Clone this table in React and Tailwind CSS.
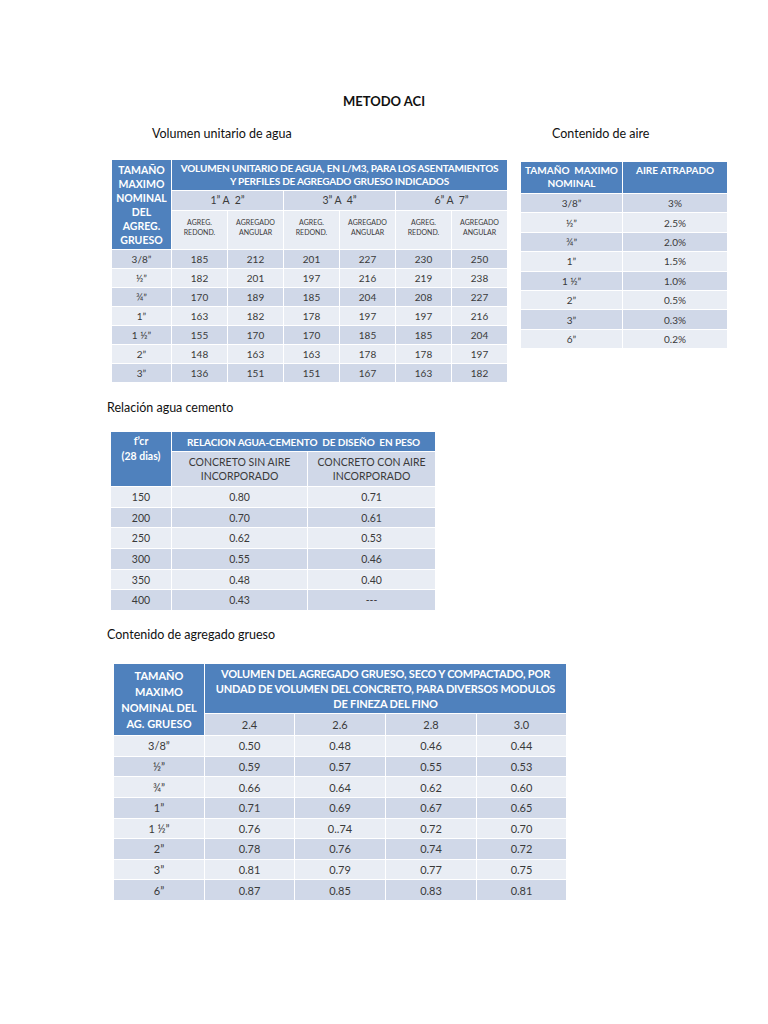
const BLUE = "bg-[#4f81bd]";
const DARK = "bg-[#d0d8e8]";
const LIGHT = "bg-[#e9edf4]";
const cell = "border border-white p-0 text-center align-middle";

const aguaRows = [
  ["3/8”", 185, 212, 201, 227, 230, 250],
  ["½”", 182, 201, 197, 216, 219, 238],
  ["¾”", 170, 189, 185, 204, 208, 227],
  ["1”", 163, 182, 178, 197, 197, 216],
  ["1 ½”", 155, 170, 170, 185, 185, 204],
  ["2”", 148, 163, 163, 178, 178, 197],
  ["3”", 136, 151, 151, 167, 163, 182],
];

const aireRows = [
  ["3/8”", "3%"],
  ["½”", "2.5%"],
  ["¾”", "2.0%"],
  ["1”", "1.5%"],
  ["1 ½”", "1.0%"],
  ["2”", "0.5%"],
  ["3”", "0.3%"],
  ["6”", "0.2%"],
];

const cementoRows = [
  ["150", "0.80", "0.71"],
  ["200", "0.70", "0.61"],
  ["250", "0.62", "0.53"],
  ["300", "0.55", "0.46"],
  ["350", "0.48", "0.40"],
  ["400", "0.43", "---"],
];

const gruesoRows = [
  ["3/8”", "0.50", "0.48", "0.46", "0.44"],
  ["½”", "0.59", "0.57", "0.55", "0.53"],
  ["¾”", "0.66", "0.64", "0.62", "0.60"],
  ["1”", "0.71", "0.69", "0.67", "0.65"],
  ["1 ½”", "0.76", "0..74", "0.72", "0.70"],
  ["2”", "0.78", "0.76", "0.74", "0.72"],
  ["3”", "0.81", "0.79", "0.77", "0.75"],
  ["6”", "0.87", "0.85", "0.83", "0.81"],
];

function TablaAgua() {
  return (
    <table className="border-collapse table-fixed w-[396px] text-[#3a3a3a]">
      <colgroup>
        <col className="w-[60px]" />
        {[0, 1, 2, 3, 4, 5].map((i) => (
          <col key={i} className="w-[56px]" />
        ))}
      </colgroup>
      <tbody>
        <tr className="h-[31px]">
          <td rowSpan={3} className={`${cell} ${BLUE} text-white font-bold text-[10.5px] leading-[14px] align-top pt-[3px]`}>
            TAMAÑO
            <br />
            MAXIMO
            <br />
            NOMINAL
            <br />
            DEL
            <br />
            AGREG.
            <br />
            GRUESO
          </td>
          <td colSpan={6} className={`${cell} ${BLUE} text-white font-bold text-[10px] leading-[13px] tracking-[-0.2px]`}>
            VOLUMEN UNITARIO DE AGUA, EN L/M3, PARA LOS ASENTAMIENTOS
            <br />Y PERFILES DE AGREGADO GRUESO INDICADOS
          </td>
        </tr>
        <tr className="h-[20px]">
          {["1” A  2”", "3” A  4”", "6” A  7”"].map((t) => (
            <td key={t} colSpan={2} className={`${cell} ${DARK} text-[10.5px] whitespace-pre`}>
              {t}
            </td>
          ))}
        </tr>
        <tr className="h-[39px]">
          {[0, 1, 2].flatMap((i) => [
            <td key={`r${i}`} className={`${cell} ${LIGHT} text-[7px] leading-[10px] pb-[6px]`}>
              AGREG.
              <br />
              REDOND.
            </td>,
            <td key={`a${i}`} className={`${cell} ${LIGHT} text-[7px] leading-[10px] pb-[6px]`}>
              AGREGADO
              <br />
              ANGULAR
            </td>,
          ])}
        </tr>
        {aguaRows.map((r, i) => (
          <tr key={r[0]} className="h-[19px]">
            {r.map((v, j) => (
              <td key={j} className={`${cell} ${i % 2 === 0 ? DARK : LIGHT} text-[10px] leading-[12px]`}>
                {v}
              </td>
            ))}
          </tr>
        ))}
      </tbody>
    </table>
  );
}

function TablaAire() {
  return (
    <table className="border-collapse table-fixed w-[207px] text-[#3a3a3a]">
      <colgroup>
        <col className="w-[102px]" />
        <col className="w-[105px]" />
      </colgroup>
      <tbody>
        <tr className="h-[32px]">
          <td className={`${cell} ${BLUE} text-white font-bold text-[10px] leading-[13px] align-top pt-[2px]`}>
            TAMAÑO&nbsp;&nbsp;MAXIMO
            <br />
            NOMINAL
          </td>
          <td className={`${cell} ${BLUE} text-white font-bold text-[10px] leading-[13px] align-top pt-[2px]`}>
            AIRE ATRAPADO
          </td>
        </tr>
        {aireRows.map((r, i) => (
          <tr key={r[0]} className="h-[19.4px]">
            {r.map((v, j) => (
              <td key={j} className={`${cell} ${i % 2 === 0 ? DARK : LIGHT} text-[10px] leading-[12px]`}>
                {v}
              </td>
            ))}
          </tr>
        ))}
      </tbody>
    </table>
  );
}

function TablaCemento() {
  return (
    <table className="border-collapse table-fixed w-[325px] text-[#3a3a3a]">
      <colgroup>
        <col className="w-[61px]" />
        <col className="w-[136px]" />
        <col className="w-[128px]" />
      </colgroup>
      <tbody>
        <tr className="h-[20px]">
          <td rowSpan={2} className={`${cell} ${BLUE} text-white font-bold text-[10.5px] leading-[15px] align-top pt-[2px]`}>
            f’cr
            <br />
            (28 dias)
          </td>
          <td colSpan={2} className={`${cell} ${BLUE} text-white font-bold text-[10px] leading-[12px] tracking-[-0.1px]`}>
            RELACION AGUA-CEMENTO&nbsp; DE DISEÑO&nbsp; EN PESO
          </td>
        </tr>
        <tr className="h-[35px]">
          <td className={`${cell} ${DARK} text-[10.5px] leading-[14px]`}>
            CONCRETO SIN AIRE
            <br />
            INCORPORADO
          </td>
          <td className={`${cell} ${DARK} text-[10.5px] leading-[14px]`}>
            CONCRETO CON AIRE
            <br />
            INCORPORADO
          </td>
        </tr>
        {cementoRows.map((r, i) => (
          <tr key={r[0]} className="h-[20.7px]">
            {r.map((v, j) => (
              <td key={j} className={`${cell} ${i % 2 === 0 ? LIGHT : DARK} text-[10.5px] leading-[12px]`}>
                {v}
              </td>
            ))}
          </tr>
        ))}
      </tbody>
    </table>
  );
}

function TablaGrueso() {
  return (
    <table className="border-collapse table-fixed w-[453px] text-[#3a3a3a]">
      <colgroup>
        <col className="w-[91px]" />
        <col className="w-[90px]" />
        <col className="w-[91px]" />
        <col className="w-[91px]" />
        <col className="w-[90px]" />
      </colgroup>
      <tbody>
        <tr className="h-[50px]">
          <td rowSpan={2} className={`${cell} ${BLUE} text-white font-bold text-[11px] leading-[16px]`}>
            TAMAÑO
            <br />
            MAXIMO
            <br />
            NOMINAL DEL
            <br />
            AG. GRUESO
          </td>
          <td colSpan={4} className={`${cell} ${BLUE} text-white font-bold text-[11px] leading-[15px] tracking-[-0.2px]`}>
            VOLUMEN DEL AGREGADO GRUESO, SECO Y COMPACTADO, POR
            <br />
            UNDAD DE VOLUMEN DEL CONCRETO, PARA DIVERSOS MODULOS
            <br />
            DE FINEZA DEL FINO
          </td>
        </tr>
        <tr className="h-[22px]">
          {["2.4", "2.6", "2.8", "3.0"].map((t) => (
            <td key={t} className={`${cell} ${DARK} text-[11px] leading-[13px]`}>
              {t}
            </td>
          ))}
        </tr>
        {gruesoRows.map((r, i) => (
          <tr key={r[0]} className="h-[20.6px]">
            {r.map((v, j) => (
              <td key={j} className={`${cell} ${i % 2 === 0 ? LIGHT : DARK} text-[11px] leading-[13px]`}>
                {v}
              </td>
            ))}
          </tr>
        ))}
      </tbody>
    </table>
  );
}

export default function App() {
  return (
    <div className="w-[768px] h-[1024px] bg-white text-[#111] font-['Lato','Open_Sans',sans-serif] overflow-hidden">
      <div className="pt-[92px] text-center text-[13px] font-bold leading-[18px]">METODO ACI</div>

      <div className="flex items-start mt-[15px]">
        <div className="ml-[111px]">
          <div className="ml-[41px] text-[12.5px] leading-[18px]">Volumen unitario de agua</div>
          <div className="mt-[16px]">
            <TablaAgua />
          </div>
        </div>
        <div className="ml-[12px]">
          <div className="ml-[32px] text-[12.5px] leading-[18px]">Contenido de aire</div>
          <div className="mt-[18px]">
            <TablaAire />
          </div>
        </div>
      </div>

      <div className="ml-[107px] mt-[16px] text-[12.5px] leading-[18px]">Relación agua cemento</div>
      <div className="ml-[110px] mt-[14px]">
        <TablaCemento />
      </div>

      <div className="ml-[107px] mt-[15px] text-[12.5px] leading-[18px]">Contenido de agregado grueso</div>
      <div className="ml-[113px] mt-[19px]">
        <TablaGrueso />
      </div>
    </div>
  );
}
